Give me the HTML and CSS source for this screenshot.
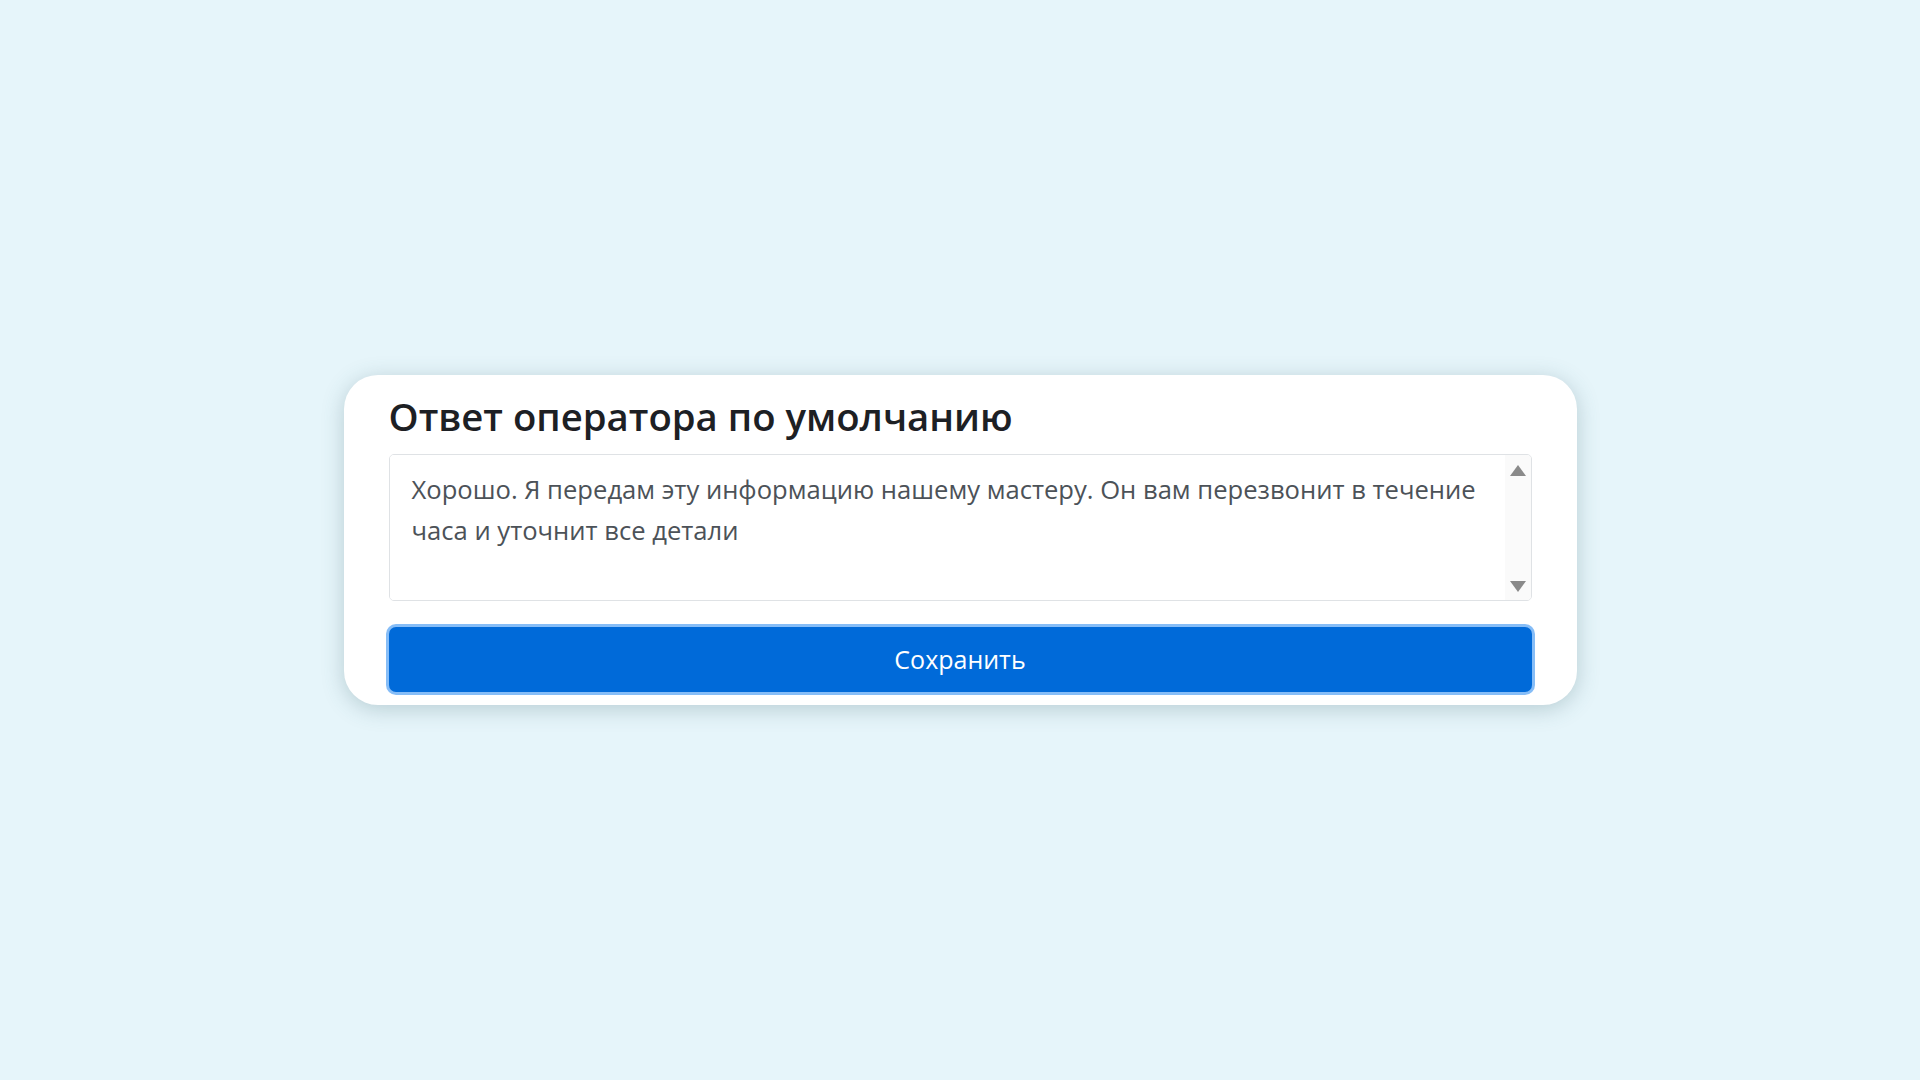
FILE: index.html
```html
<!DOCTYPE html>
<html lang="ru">
<head>
    <meta charset="UTF-8">
    <meta name="viewport" content="width=device-width, initial-scale=1.0">
    <title>Ответ оператора</title>
    <link rel="stylesheet" href="styles.css">
</head>
<body>

    <!-- Default operator reply -->
    <div class="reply-card">
        <h2 class="reply-title">Ответ оператора по умолчанию</h2>

        <div class="reply-box">
            <textarea class="reply-text" id="replyText">Хорошо. Я передам эту информацию нашему мастеру. Он вам перезвонит в течение часа и уточнит все детали</textarea>
            <div class="reply-scroll">
                <span class="arrow-up"></span>
                <span class="arrow-down"></span>
            </div>
        </div>

        <button class="save-btn" type="button">Сохранить</button>
    </div>

</body>
</html>
```

FILE: styles.css
```css
html, body {
    height: 100%;
}

body {
    margin: 0;
    font-family: "Open Sans", "Noto Sans", Arial, sans-serif;
    background-color: #e6f5fa;
    color: #212529;
    display: flex;
    align-items: center;
    justify-content: center;
}

.reply-card {
    width: 1233px;
    box-sizing: border-box;
    padding: 19px 45px 13px;
    background-color: #fff;
    border-radius: 34px;
    box-shadow: 0 4px 22px rgba(60, 100, 110, 0.28);
}

.reply-title {
    margin: 0 0 14px;
    font-size: 38.3px;
    font-weight: 600;
    line-height: 1.2;
    color: #1d2024;
}

.reply-box {
    display: flex;
    height: 147px;
    box-sizing: border-box;
    border: 1px solid #dfe2e5;
    border-radius: 5px;
    overflow: hidden;
}

.reply-text {
    flex: 1;
    border: none;
    outline: none;
    resize: none;
    overflow: hidden;
    padding: 14px 22px;
    font-family: "Open Sans", "Noto Sans", Arial, sans-serif;
    font-size: 25.6px;
    line-height: 41px;
    color: #4c5258;
    background: #fff;
}

.reply-scroll {
    width: 26px;
    background-color: #fafafa;
    display: flex;
    flex-direction: column;
    align-items: center;
    justify-content: space-between;
    padding: 10px 0 8px;
}

.arrow-up {
    width: 0;
    height: 0;
    border-left: 8px solid transparent;
    border-right: 8px solid transparent;
    border-bottom: 11px solid #8a8a8a;
}

.arrow-down {
    width: 0;
    height: 0;
    border-left: 8px solid transparent;
    border-right: 8px solid transparent;
    border-top: 11px solid #8a8a8a;
}

.save-btn {
    display: block;
    width: 100%;
    height: 65px;
    margin-top: 26px;
    border: none;
    border-radius: 7px;
    background-color: #006ad9;
    box-shadow: 0 0 0 3px #86bdf7;
    color: #fff;
    font-family: "Open Sans", "Noto Sans", Arial, sans-serif;
    font-size: 25px;
    cursor: pointer;
}

.save-btn:hover {
    background-color: #005fc4;
}
```
